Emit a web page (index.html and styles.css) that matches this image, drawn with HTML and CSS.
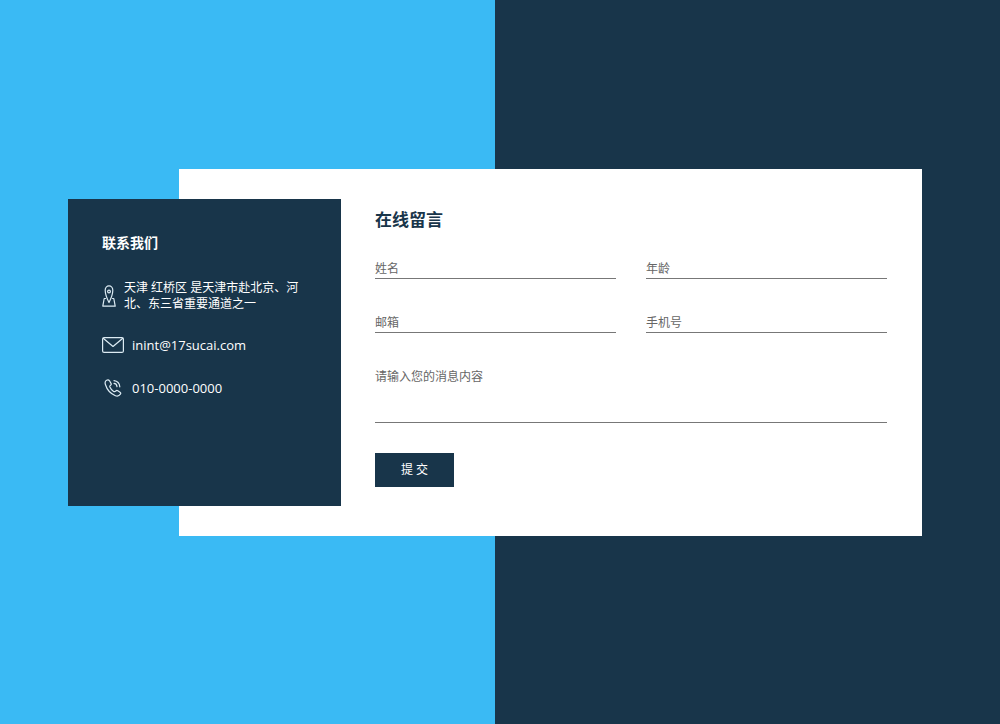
FILE: index.html
```
<!DOCTYPE html>
<html lang="zh-CN">
<head>
<meta charset="utf-8">
<meta name="viewport" content="width=device-width, initial-scale=1">
<title>在线留言</title>
<link rel="stylesheet" href="styles.css">
</head>
<body class="page">
<main class="contact">
  <section class="card">
    <h1 class="card-title">在线留言</h1>
    <form class="form">
      <input class="field" type="text" name="name" placeholder="姓名" aria-label="姓名">
      <input class="field" type="text" name="age" placeholder="年龄" aria-label="年龄">
      <input class="field" type="email" name="email" placeholder="邮箱" aria-label="邮箱">
      <input class="field" type="tel" name="phone" placeholder="手机号" aria-label="手机号">
      <textarea class="field message" name="message" placeholder="请输入您的消息内容" aria-label="请输入您的消息内容"></textarea>
      <button class="submit" type="submit">提 交</button>
    </form>
  </section>
  <aside class="info">
    <h2 class="info-title">联系我们</h2>
    <address class="info-list">
      <div class="info-row address">
        <svg class="icon" width="14" height="22" viewBox="0 0 14 22" aria-hidden="true">
          <path d="M7 17.500C5 13.500 3.200 9.800 3.200 5.200a3.800 4.400 0 0 1 7.600 0C10.800 9.800 9 13.500 7 17.500z"/>
          <circle cx="7" cy="6.500" r="1.400"/>
          <path d="M3.500 13.500H2.200L.800 21.200h12.400l-1.400-7.700h-1.300"/>
        </svg>
        <span>天津 红桥区 是天津市赴北京、河北、东三省重要通道之一</span>
      </div>
      <div class="info-row">
        <svg class="icon" width="22" height="16" viewBox="0 0 22 16" aria-hidden="true">
          <rect x=".600" y=".600" width="20.800" height="14.800" rx="1.500"/>
          <path d="M1.500 1.500L11 9.500l9.500-8"/>
        </svg>
        <span>inint@17sucai.com</span>
      </div>
      <div class="info-row">
        <svg class="icon" width="22" height="18" viewBox="0 0 22 18" aria-hidden="true">
          <path d="M4.600 1.200C3 2 2.800 3.500 3.400 5.500c1.400 4.600 5.200 9.200 10 11.200 2 .800 3.800.200 5-1.500.600-.800.400-1.400-.400-2l-2.200-1.500c-.800-.500-1.400-.400-2 .300-.700.900-1.300 1-2.200.400C9.900 11.200 8.600 9.600 7.900 7.900c-.300-.800 0-1.300.700-1.700.700-.500.800-1.100.400-1.800L7.500 1.800C6.900.900 5.800.600 4.600 1.200z"/>
          <path d="M12 1.600c3.200.300 5.500 2.800 5.800 6.200M12 4.400c1.700.200 2.800 1.500 3 3.200"/>
        </svg>
        <span>010-0000-0000</span>
      </div>
    </address>
  </aside>
</main>
</body>
</html>
```
FILE: styles.css
```
*, *::before, *::after { box-sizing: border-box; }

.page {
  margin: 0;
  min-height: 100vh;
  padding: 20px 10px 39px 0;
  display: grid;
  align-items: center;
  justify-items: center;
  background: linear-gradient(90deg, #3abaf4 49.5%, #18354a 49.5%);
  font-family: "Open Sans", "Noto Sans CJK SC", sans-serif;
  font-size: 12px;
  line-height: 16px;
}

.contact {
  width: 100%;
  max-width: 854px;
  display: grid;
  grid-template-columns: 111px 162px 1fr;
}

.card {
  grid-area: 1 / 2 / 2 / 4;
  padding: 39px 35px 49px 196px;
  background: #fff;
}

.card-title {
  margin: 0 0 23px;
  color: #18354a;
  font-size: 17px;
  line-height: 24px;
}

.form {
  display: grid;
  grid-template-columns: 1fr 1fr;
  gap: 30px;
}

.field {
  width: 100%;
  height: 24px;
  margin: 0;
  padding: 3px 0 0;
  border: 0;
  border-bottom: 1px solid #777;
  border-radius: 0;
  outline: 0;
  background: transparent;
  color: #555;
  font: inherit;
}

.field::placeholder { color: #666; opacity: 1; }
.field:focus { border-color: #3abaf4; }

.message {
  display: block;
  grid-column: 1 / -1;
  height: 60px;
  padding-top: 6px;
  resize: none;
}

.submit {
  justify-self: start;
  padding: 9px 26px;
  border: 0;
  background: #18354a;
  color: #fff;
  font: inherit;
  cursor: pointer;
}

.info {
  grid-area: 1 / 1 / 2 / 3;
  margin: 30px 0;
  padding: 34px;
  background: #18354a;
  color: #fff;
}

.info-title {
  margin: 0 0 27px;
  font-size: 14px;
  line-height: 20px;
}

.info-list {
  display: grid;
  gap: 23px;
  font-style: normal;
}

.info-row {
  display: flex;
  align-items: center;
  gap: 8px;
  font-size: 13px;
  line-height: 20px;
}

.address {
  font-size: 12px;
  line-height: 16px;
}

.icon {
  flex: none;
  fill: none;
  stroke: #dcebf3;
  stroke-width: 1.2;
  stroke-linecap: round;
  stroke-linejoin: round;
}

@media (max-width: 760px) {
  .page { padding: 20px; }
  .contact { grid-template-columns: 1fr; }
  .card, .info { grid-area: auto; margin: 0; padding: 34px; }
}
```
